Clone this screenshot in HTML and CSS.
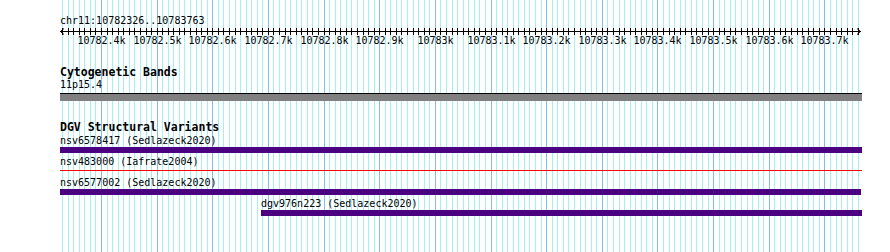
FILE: index.html
```html
<!DOCTYPE html>
<html lang="en">
<head>
    <meta charset="UTF-8">
    <title>Genome Browser</title>
    <link rel="stylesheet" href="styles.css">
</head>
<body>
    <div class="browser">
        <svg class="grid" id="grid" width="890" height="252"></svg>

        <div class="tracks">
            <!-- ruler -->
            <div class="ruler">
                <div class="locus">chr11:10782326..10783763</div>
                <svg class="scale" id="scale" width="802" height="7"></svg>
                <div class="scale-labels" id="scaleLabels"></div>
            </div>

            <!-- cytobands -->
            <div class="track cyto">
                <div class="track-title">Cytogenetic Bands</div>
                <div class="feature-label">11p15.4</div>
                <div class="band"></div>
            </div>

            <!-- DGV -->
            <div class="track dgv">
                <div class="track-title">DGV Structural Variants</div>
                <div class="feature">
                    <div class="feature-label">nsv6578417 (Sedlazeck2020)</div>
                    <div class="bar"></div>
                </div>
                <div class="feature">
                    <div class="feature-label">nsv483000 (Iafrate2004)</div>
                    <div class="bar line"></div>
                </div>
                <div class="feature">
                    <div class="feature-label">nsv6577002 (Sedlazeck2020)</div>
                    <div class="bar" style="width:801px"></div>
                </div>
                <div class="feature" style="margin-left:201px">
                    <div class="feature-label">dgv976n223 (Sedlazeck2020)</div>
                    <div class="bar"></div>
                </div>
            </div>
        </div>
    </div>

    <script src="script.js"></script>
</body>
</html>
```

FILE: styles.css
```css
body {
    margin: 0;
    background-color: #fff;
    font-family: "DejaVu Sans Mono", monospace;
    font-size: 10px;
    color: #000;
}

.browser {
    position: relative;
    width: 890px;
    height: 252px;
    overflow: hidden;
}

.grid {
    position: absolute;
    left: 0;
    top: 0;
}

.tracks {
    position: relative;
    margin-left: 60px;
    width: 802px;
}

.ruler {
    padding-top: 15px;
    height: 32px;
}

.locus {
    line-height: 12px;
    height: 13px;
}

.scale {
    display: block;
}

.scale-labels {
    position: relative;
    height: 12px;
    line-height: 12px;
}

.scale-labels span {
    position: absolute;
    top: 0;
    transform: translateX(-50%);
    white-space: nowrap;
}

.track-title {
    font-size: 11.5px;
    font-weight: bold;
    line-height: 13px;
}

.feature-label {
    line-height: 12px;
    white-space: nowrap;
}

.cyto {
    padding-top: 19px;
}

.band {
    margin-top: 2px;
    height: 7px;
    border-top: 1px solid #000;
    background-color: #808080;
}

.dgv {
    padding-top: 20px;
}

.dgv .track-title {
    margin-bottom: 1px;
}

.feature {
    height: 21px;
}

.bar {
    height: 6px;
    background-color: #4b0082;
}

.bar.line {
    background: linear-gradient(#f00, #f00) 0 2px / 100% 1px no-repeat;
}
```

FILE: script.js
```js
// grid + ruler
const start = 10782326;
const end = 10783763;
const pxPerBp = 0.5565;
const origin = 60.3;

function toX(bp) {
    return origin + (bp - start) * pxPerBp;
}

const ns = "http://www.w3.org/2000/svg";
const grid = document.getElementById("grid");
const scale = document.getElementById("scale");
const labels = document.getElementById("scaleLabels");

function line(svg, x1, y1, x2, y2, color) {
    const l = document.createElementNS(ns, "line");
    l.setAttribute("x1", x1);
    l.setAttribute("y1", y1);
    l.setAttribute("x2", x2);
    l.setAttribute("y2", y2);
    l.setAttribute("stroke", color);
    l.setAttribute("stroke-width", 1);
    l.setAttribute("shape-rendering", "crispEdges");
    svg.appendChild(l);
}

for (let bp = Math.ceil(start / 10) * 10; bp <= end; bp += 10) {
    const x = Math.floor(toX(bp)) + 0.5;
    const major = bp % 100 == 0;
    line(grid, x, 0, x, 252, major ? "#80bef0" : "#a6eef2");

    // tick on the scale bar
    line(scale, x - 60, 0, x - 60, 7, "#000");

    if (major) {
        const span = document.createElement("span");
        span.textContent = (bp / 1000) + "k";
        span.style.left = (x - 60) + "px";
        labels.appendChild(span);
    }
}

// axis with arrows
line(scale, 0, 3.5, 801, 3.5, "#000");
const arrows = document.createElementNS(ns, "path");
arrows.setAttribute("d", "M4 0.5 L0.5 3.5 L4 6.5 M797 0.5 L800.5 3.5 L797 6.5");
arrows.setAttribute("stroke", "#000");
arrows.setAttribute("fill", "none");
scale.appendChild(arrows);
```
